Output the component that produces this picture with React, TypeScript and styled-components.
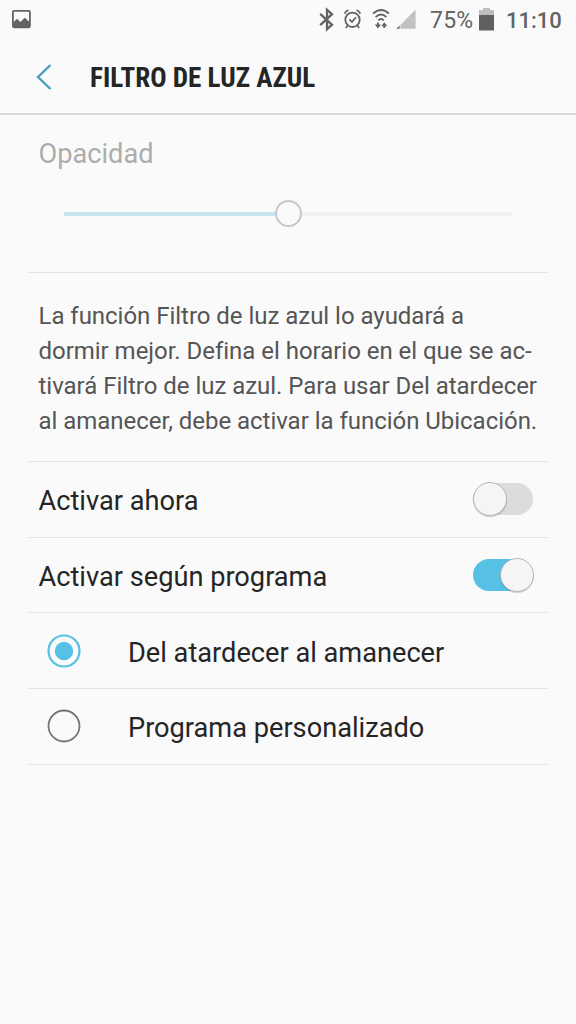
import React, { useState } from 'react';
import styled, { createGlobalStyle } from 'styled-components';

const GlobalStyle = createGlobalStyle`
  * { box-sizing: border-box; }
  body { margin: 0; background: #fafafa; }
`;

const Screen = styled.div`
  width: 576px;
  height: 1024px;
  overflow: hidden;
  background: #fafafa;
  color: #252525;
  font-family: Roboto, sans-serif;
  display: flex;
  flex-direction: column;
`;

const StatusBar = styled.div`
  height: 40px;
  flex: none;
  display: flex;
  justify-content: space-between;
`;

const StatusIcons = styled.svg`
  display: block;
  flex: none;
`;

const StatusRight = styled.div`
  display: flex;
  width: 258px;
`;

const StatusText = styled.span<{ $width: number; $size: number; $spacing?: number; $weight?: number }>`
  width: ${(p) => p.$width}px;
  font-size: ${(p) => p.$size}px;
  font-weight: ${(p) => p.$weight ?? 400};
  line-height: 41px;
  letter-spacing: ${(p) => p.$spacing ?? 0}px;
  white-space: nowrap;
  color: #636363;
`;

const Header = styled.header`
  height: 75px;
  flex: none;
  display: flex;
  align-items: center;
  padding: 1px 0 0 34px;
  border-bottom: 2px solid #d9d9d9;
`;

const BackIcon = styled.svg`
  display: block;
  width: 20px;
  height: 28px;
  margin-right: 36px;
`;

const Title = styled.h1`
  margin: 0;
  padding-top: 2px;
  font-family: 'Roboto Condensed', Roboto, sans-serif;
  font-size: 27.1px;
  font-stretch: 75%;
  font-weight: 700;
  line-height: 32px;
  white-space: nowrap;
`;

const Content = styled.main`
  padding: 0 29px;
`;

const Section = styled.section<{ $height: number }>`
  height: ${(p) => p.$height}px;
  border-bottom: 1px solid #e2e2e2;
  padding: 0 9.5px;
`;

const SliderLabel = styled.div`
  padding-top: 23px;
  font-size: 27.2px;
  line-height: 32px;
  color: #acacac;
`;

const Slider = styled.div`
  display: flex;
  align-items: center;
  height: 28px;
  margin: 29.5px 25.5px 0;
`;

const Track = styled.div<{ $color: string }>`
  flex: 1;
  height: 4px;
  background: ${(p) => p.$color};
`;

const Thumb = styled.div`
  width: 27px;
  height: 27px;
  border: 2px solid #c6c6c6;
  border-radius: 50%;
`;

const Description = styled.p`
  margin: 0;
  padding-top: 26.4px;
  font-size: 24px;
  line-height: 34.7px;
  letter-spacing: -0.03px;
  color: #555;
  white-space: nowrap;
`;

const Row = styled.div`
  height: 75.7px;
  border-bottom: 1px solid #e2e2e2;
  padding: 2px 14px 0 9.5px;
  display: flex;
  align-items: center;
  font-size: 27.2px;
  line-height: 32px;
  cursor: pointer;
`;

const RowLabel = styled.span`
  flex: 1;
  padding-top: 1.6px;
  white-space: nowrap;
`;

const Switch = styled.button<{ $on: boolean }>`
  width: 60px;
  height: 32px;
  padding: 0;
  margin-top: -2px;
  border: 0;
  border-radius: 16px;
  background: ${(p) => (p.$on ? '#56c0e5' : '#dcdcdc')};
  display: flex;
  align-items: center;
  justify-content: ${(p) => (p.$on ? 'flex-end' : 'flex-start')};
`;

const Knob = styled.span`
  flex: none;
  width: 34px;
  height: 34px;
  margin: 0 -1px 0 0;
  border-radius: 50%;
  background: #f5f5f5;
  border: 1px solid #b8b8b8;
  box-shadow: 0 1px 1px rgba(0, 0, 0, 0.18);
`;

const RadioIcon = styled.svg`
  display: block;
  width: 34px;
  height: 34px;
  margin: -2px 47px 0 8.5px;
`;

const Radio = ({ checked }: { checked: boolean }) => (
  <RadioIcon viewBox="0 0 34 34" fill="none">
    <circle cx="17" cy="17" r="15.5" stroke={checked ? '#56c0e5' : '#747474'} strokeWidth={checked ? 2.2 : 1.8} />
    {checked && <circle cx="17" cy="17" r="9.2" fill="#56c0e5" />}
  </RadioIcon>
);

const schedules = ['Del atardecer al amanecer', 'Programa personalizado'];

export default function App() {
  const [now, setNow] = useState(false);
  const [scheduled, setScheduled] = useState(true);
  const [selected, setSelected] = useState(0);

  return (
    <Screen>
      <GlobalStyle />
      <StatusBar>
        <StatusIcons width="40" height="40" viewBox="0 0 40 40">
          <rect x="12.9" y="10.9" width="17" height="16.4" rx="1.2" fill="none" stroke="#636363" strokeWidth="1.8" />
          <path d="M13 22.5 L17.2 18.8 L20.3 22 L24.8 17.8 L30 22.5 V27.5 H13Z" fill="#636363" />
        </StatusIcons>
        <StatusRight>
          <StatusIcons width="112" height="40" viewBox="318 0 112 40" fill="none" stroke="#636363">
            <path d="M320.2 13.8 L332 24.8 L327 29.2 V9.8 L332 14.2 L320.2 25.2" strokeWidth="2.3" />
            <circle cx="352.5" cy="19.8" r="7.2" strokeWidth="1.8" />
            <path d="M349.4 19.3 L352 21.9 L356 17.3" strokeWidth="1.7" />
            <path d="M344.8 13.8 Q345.5 11 348.6 10.3 M360.2 13.8 Q359.5 11 356.4 10.3 M347.8 25.2 L345.8 28 M357.2 25.2 L359.2 28" strokeWidth="1.6" />
            <path d="M373 13.6 Q381 6.4 389 13.6 M375.6 17.1 Q381 12 386.4 17.1 M378.2 20.4 Q381 17.8 383.8 20.4" strokeWidth="1.9" />
            <path d="M377.9 22.6 V26 M384.3 28 V25" strokeWidth="1.9" />
            <path d="M374.8 24.6 H381 L377.9 28.6Z M381.2 26.3 H387.4 L384.3 22.3Z" fill="#636363" stroke="none" />
            <path d="M415.6 9.6 V28.8 H400.4 V24.9Z" fill="#c2c2c2" stroke="none" />
            <path d="M399.6 25.6 V28.8 H396.4Z" fill="#636363" stroke="none" />
          </StatusIcons>
          <StatusText $width={48} $size={23} $spacing={0.2}>75%</StatusText>
          <StatusIcons width="28" height="40" viewBox="478 0 28 40">
            <path d="M479 15 V10 H483 V8 H490 V10 H494 V15Z" fill="#bdbdbd" />
            <rect x="479" y="15" width="15" height="15.5" fill="#606060" />
          </StatusIcons>
          <StatusText $width={70} $size={22} $weight={500}>11:10</StatusText>
        </StatusRight>
      </StatusBar>
      <Header>
        <BackIcon viewBox="0 0 20 28" fill="none" stroke="#469fc0" strokeWidth="2.4">
          <path d="M16.5 2 L4 14 L16.5 26" />
        </BackIcon>
        <Title>FILTRO DE LUZ AZUL</Title>
      </Header>
      <Content>
        <Section $height={158}>
          <SliderLabel>Opacidad</SliderLabel>
          <Slider>
            <Track $color="#c8e4ef" />
            <Thumb />
            <Track $color="#f0f0f0" />
          </Slider>
        </Section>
        <Section $height={189}>
          <Description>
            La función Filtro de luz azul lo ayudará a<br />
            dormir mejor. Defina el horario en el que se ac-<br />
            tivará Filtro de luz azul. Para usar Del atardecer<br />
            al amanecer, debe activar la función Ubicación.
          </Description>
        </Section>
        <Row onClick={() => setNow(!now)}>
          <RowLabel>Activar ahora</RowLabel>
          <Switch $on={now} aria-label="Activar ahora"><Knob /></Switch>
        </Row>
        <Row onClick={() => setScheduled(!scheduled)}>
          <RowLabel>Activar según programa</RowLabel>
          <Switch $on={scheduled} aria-label="Activar según programa"><Knob /></Switch>
        </Row>
        {schedules.map((label, i) => (
          <Row key={label} onClick={() => setSelected(i)}>
            <Radio checked={selected === i} />
            <RowLabel>{label}</RowLabel>
          </Row>
        ))}
      </Content>
    </Screen>
  );
}
